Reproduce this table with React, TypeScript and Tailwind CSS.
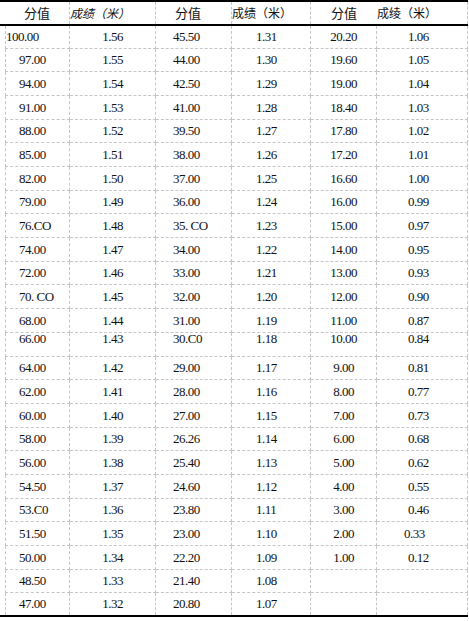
const col1 = ["100.00", "97.00", "94.00", "91.00", "88.00", "85.00", "82.00", "79.00", "76.CO", "74.00", "72.00", "70. CO", "68.00", "66.00", "64.00", "62.00", "60.00", "58.00", "56.00", "54.50", "53.C0", "51.50", "50.00", "48.50", "47.00"];
const col3 = ["45.50", "44.00", "42.50", "41.00", "39.50", "38.00", "37.00", "36.00", "35. CO", "34.00", "33.00", "32.00", "31.00", "30.C0", "29.00", "28.00", "27.00", "26.26", "25.40", "24.60", "23.80", "23.00", "22.20", "21.40", "20.80"];
const col5 = ["20.20", "19.60", "19.00", "18.40", "17.80", "17.20", "16.60", "16.00", "15.00", "14.00", "13.00", "12.00", "11.00", "10.00", "9.00", "8.00", "7.00", "6.00", "5.00", "4.00", "3.00", "2.00", "1.00", "", ""];
const col6 = ["1.06", "1.05", "1.04", "1.03", "1.02", "1.01", "1.00", "0.99", "0.97", "0.95", "0.93", "0.90", "0.87", "0.84", "0.81", "0.77", "0.73", "0.68", "0.62", "0.55", "0.46", "0.33", "0.12", "", ""];

// row heights incl. the dashed bottom line, measured off the sheet
const heights = ["h-[23px]", "h-[23px]", "h-[24px]", "h-[24px]", "h-[23px]", "h-[24px]", "h-[24px]", "h-[23px]", "h-[24px]", "h-[24px]", "h-[23px]", "h-[24px]", "h-[24px]", "h-[24px]", "h-[23px]", "h-[24px]", "h-[24px]", "h-[23px]", "h-[24px]", "h-[24px]", "h-[23px]", "h-[24px]", "h-[24px]", "h-[23px]", "h-[24px]"];

const cell = "flex border-r border-dashed border-[#c6c6c6]";
const num = "font-['Liberation_Serif',serif] text-[13px] tracking-[-0.5px] text-[#111]";
const head = "font-['Noto_Sans_CJK_SC','Noto_Sans',sans-serif] text-[#111]";

export default function App() {
  return (
    <div className="w-[469px] h-[621px] bg-white">
      <div className="w-[468px] h-[2px] bg-black" />
      <div className={`flex h-[22px] ${head}`}>
        <div className="w-[5px]" />
        <div className="w-[65px] flex items-center justify-center border-r border-dashed border-[#c6c6c6] text-[13px]">分值</div>
        <div className="w-[86px] flex items-center border-r border-dashed border-[#c6c6c6] text-[12px] italic whitespace-nowrap">成绩（米）</div>
        <div className="w-[76px] flex items-center pl-[19px] border-r border-dashed border-[#c6c6c6] text-[13px]">分值</div>
        <div className="w-[79px] flex items-center border-r border-dashed border-[#c6c6c6] text-[12px] whitespace-nowrap">成绩（米）</div>
        <div className="w-[66px] flex items-center justify-center text-[13px]">分值</div>
        <div className="w-[91px] flex items-center border-r border-dashed border-[#c6c6c6] text-[12px] whitespace-nowrap">成绫（米）</div>
      </div>
      <div className="w-[468px] h-[2px] bg-black" />
      {col1.map((v, i) => {
        const last = i === col1.length - 1;
        // this row's text sits at the top of its cell in the sheet
        const top = i === 13;
        const line = last ? "" : "border-b border-dashed border-[#c6c6c6]";
        const align = top ? "items-start leading-[12px]" : "items-center";
        return (
          <div key={i} className={`flex ${last ? "h-[22px]" : heights[i]} ${num}`}>
            <div className="w-[5px]" />
            <div className={`${cell} ${align} ${line} w-[65px] border-l ${i === 0 ? "pl-0" : "pl-[13px]"}`}>{v}</div>
            <div className={`${cell} ${align} ${line} w-[86px] justify-center`}>{(1.56 - i * 0.01).toFixed(2)}</div>
            <div className={`${cell} ${align} ${line} w-[76px] pl-[17px]`}>{col3[i]}</div>
            <div className={`${cell} ${align} ${line} w-[79px] pl-[24px]`}>{(1.31 - i * 0.01).toFixed(2)}</div>
            <div className={`${cell} ${align} ${line} w-[66px] justify-center`}>{col5[i]}</div>
            <div className={`${cell} ${align} ${line} w-[91px] ${i === 21 ? "pl-[27px]" : "pl-[31px]"}`}>{col6[i]}</div>
          </div>
        );
      })}
      <div className="w-[468px] h-[2px] bg-black" />
    </div>
  );
}
